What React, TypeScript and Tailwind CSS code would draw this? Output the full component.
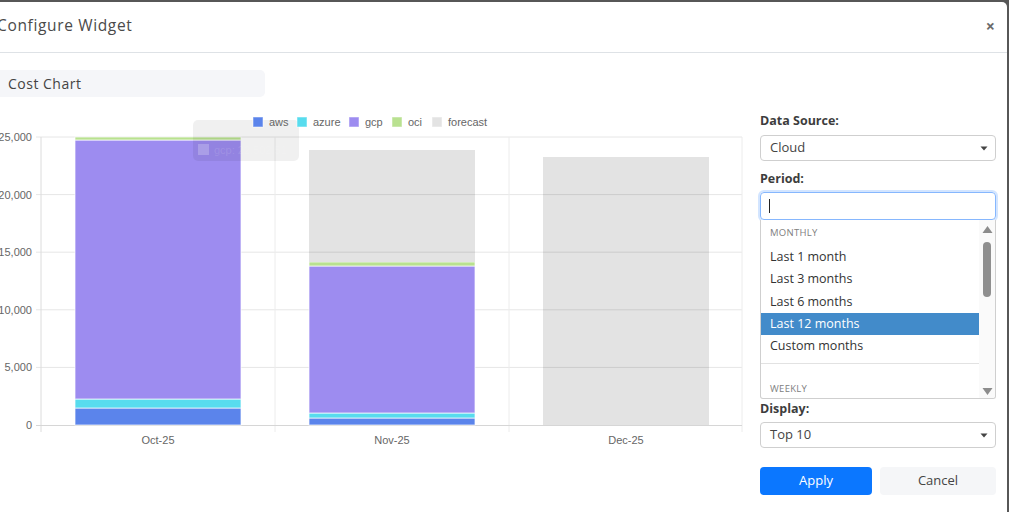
import React from "react";

const font = { fontFamily: '"Open Sans", "Noto Sans", sans-serif' };

function Chart() {
  const yTicks = [
    { v: "25,000", y: 137 },
    { v: "20,000", y: 194.6 },
    { v: "15,000", y: 252.2 },
    { v: "10,000", y: 309.8 },
    { v: "5,000", y: 367.4 },
  ];
  const vx = [41, 275, 509, 742];
  const C = {
    aws: "#5b84eb",
    azure: "#58dcee",
    gcp: "#9d8cf0",
    oci: "#b9e190",
  };
  const seg = (x: number, y1: number, y2: number, fill: string, key: string) => (
    <rect key={key} x={x} y={y1} width={166} height={y2 - y1} fill={fill} stroke="#ffffff" strokeOpacity={0.7} strokeWidth={1} />
  );
  return (
    <svg width={770} height={345} viewBox="-16 110 770 345" className="block">
      <g fontFamily='"Liberation Sans", Arial, sans-serif' fontSize="11" fill="#666">
        {yTicks.map((t) => (
          <line key={t.v} x1={36} x2={742} y1={t.y} y2={t.y} stroke="#e6e6e6" strokeWidth={1} />
        ))}
        {vx.map((x) => (
          <line key={x} x1={x} x2={x} y1={137} y2={432} stroke={x === 41 ? "#dcdcdc" : "#ececec"} strokeWidth={1} />
        ))}
        <line x1={36} x2={742} y1={425.5} y2={425.5} stroke="#d6d6d6" strokeWidth={1} />
        {yTicks.map((t) => (
          <text key={t.v} x={32} y={t.y + 4} textAnchor="end">{t.v}</text>
        ))}
        <text x={32} y={429} textAnchor="end">0</text>
        {seg(75, 408, 425, C.aws, "o1")}
        {seg(75, 399, 408, C.azure, "o2")}
        {seg(75, 140, 399, C.gcp, "o3")}
        {seg(75, 137, 140, C.oci, "o4")}
        {seg(309, 418, 425, C.aws, "n1")}
        {seg(309, 413, 418, C.azure, "n2")}
        {seg(309, 266, 413, C.gcp, "n3")}
        {seg(309, 262, 266, C.oci, "n4")}
        <rect x={309} y={150} width={166} height={112} fill="#000" fillOpacity={0.11} />
        <rect x={543} y={157} width={166} height={268} fill="#000" fillOpacity={0.11} />
        <text x={158} y={444} textAnchor="middle">Oct-25</text>
        <text x={392} y={444} textAnchor="middle">Nov-25</text>
        <text x={626} y={444} textAnchor="middle">Dec-25</text>
        <rect x={193} y={120} width={106} height={41} rx={5} fill="#000" fillOpacity={0.06} />
        <text x={207} y={133} fill="#000" fillOpacity={0.015} fontWeight="bold">Oct-25</text>
        <rect x={198} y={144} width={11} height={11} fill="#ffffff" fillOpacity={0.22} />
        <text x={214} y={154} fill="#ffffff" fillOpacity={0.12}>gcp: 22,502.51</text>
        {[
          { x: 253, c: C.aws, t: "aws" },
          { x: 297, c: C.azure, t: "azure" },
          { x: 349, c: C.gcp, t: "gcp" },
          { x: 392, c: C.oci, t: "oci" },
          { x: 432, c: "#e3e3e3", t: "forecast" },
        ].map((l) => (
          <g key={l.t}>
            <rect x={l.x} y={117} width={10} height={10} fill={l.c} stroke="#ffffff" strokeOpacity={0.5} />
            <text x={l.x + 16} y={126}>{l.t}</text>
          </g>
        ))}
      </g>
    </svg>
  );
}

function Caret() {
  return (
    <svg width="8" height="5" viewBox="0 0 8 5">
      <path d="M0.5 0.5 L7.5 0.5 L4 4.5 Z" fill="#444" />
    </svg>
  );
}

function Select({ value }: { value: string }) {
  return (
    <div className="h-[26px] border border-[#cfcfcf] rounded-[4px] flex items-center justify-between pl-[9px] pr-[7px] text-[13px] text-[#444] bg-white">
      <span>{value}</span>
      <Caret />
    </div>
  );
}

function Label({ children }: { children: React.ReactNode }) {
  return <div className="text-[12.5px] font-bold text-[#3d3d3d] leading-[16px]">{children}</div>;
}

function Dropdown() {
  const items = ["Last 1 month", "Last 3 months", "Last 6 months", "Last 12 months", "Custom months"];
  return (
    <div className="absolute left-0 top-full w-[236px] h-[179px] bg-white border border-[#cfcfcf] border-t-0 rounded-b-[3px] flex overflow-hidden z-10">
      <div className="flex-1">
        <div className="h-[26px] pl-[9px] pt-[1px] flex items-center text-[9.5px] tracking-[0.3px] text-[#808080]">MONTHLY</div>
        {items.map((it, i) => (
          <div
            key={it}
            className={
              "pl-[9px] flex items-center text-[12.5px] " +
              (i === 3 ? "bg-[#428bca] text-white h-[22px]" : "text-[#333] " + (i === 1 ? "h-[23px]" : "h-[22px]"))
            }
          >
            {it}
          </div>
        ))}
        <div className="mt-[6px] border-t border-[#e2e2e2]" />
        <div className="h-[24px] mt-[13px] pl-[9px] flex items-center text-[9.5px] tracking-[0.3px] text-[#808080]">WEEKLY</div>
      </div>
      <div className="w-[16px] bg-[#fafafa] flex flex-col items-center">
        <svg width="11" height="9" viewBox="0 0 11 9" className="mt-[5px]">
          <path d="M0.5 8 L5.5 1 L10.5 8 Z" fill="#8c8c8c" />
        </svg>
        <div className="mt-[8px] w-[8px] h-[55px] rounded-[4px] bg-[#8f8f8f]" />
        <div className="flex-1" />
        <svg width="11" height="9" viewBox="0 0 11 9" className="mb-[2px]">
          <path d="M0.5 1 L5.5 8 L10.5 1 Z" fill="#8c8c8c" />
        </svg>
      </div>
    </div>
  );
}

export default function App() {
  return (
    <div className="w-[1009px] h-[512px] overflow-hidden bg-[#575757] pt-[2px]" style={font}>
      <div className="ml-[-16px] w-[1023px] h-[520px] bg-white rounded-tr-[5px]">
        <div className="h-[51px] border-b border-[#dee2e6] flex items-center justify-between pl-[13px] pr-[12px]">
          <div className="text-[15.5px] text-[#4a4a4a] tracking-[0.65px] mt-[-2px]">Configure Widget</div>
          <div className="text-[16px] font-bold text-[#6a6a6a] leading-none mt-[-2px]">×</div>
        </div>
        <div className="flex">
          <div className="w-[776px]">
            <div className="mt-[17px] ml-[12px] w-[269px] h-[27px] rounded-[5px] bg-[#f5f6f9] pl-[12px] flex items-center text-[14px] tracking-[0.5px] text-[#444]">
              Cost Chart
            </div>
            <div className="mt-[13px]">
              <Chart />
            </div>
          </div>
          <div className="w-[236px] pt-[60px]">
            <Label>Data Source:</Label>
            <div className="mt-[6px]">
              <Select value="Cloud" />
            </div>
            <div className="mt-[10px]">
              <Label>Period:</Label>
            </div>
            <div className="relative mt-[5px]">
              <div className="h-[28px] border border-[#86b7fe] rounded-[4px] shadow-[0_0_0_2px_rgba(13,110,253,0.18)] flex items-center pl-[8px]">
                <div className="w-[1px] h-[14px] bg-[#222]" />
              </div>
              <Dropdown />
            </div>
            <div className="h-[181px]" />
            <Label>Display:</Label>
            <div className="mt-[5px]">
              <Select value="Top 10" />
            </div>
            <div className="mt-[19px] flex gap-[8px]">
              <div className="w-[112px] h-[28px] rounded-[4px] bg-[#0b77ff] text-white text-[13px] flex items-center justify-center">Apply</div>
              <div className="w-[116px] h-[28px] rounded-[4px] bg-[#f5f6f8] text-[#444] text-[13px] flex items-center justify-center">Cancel</div>
            </div>
          </div>
        </div>
      </div>
    </div>
  );
}
